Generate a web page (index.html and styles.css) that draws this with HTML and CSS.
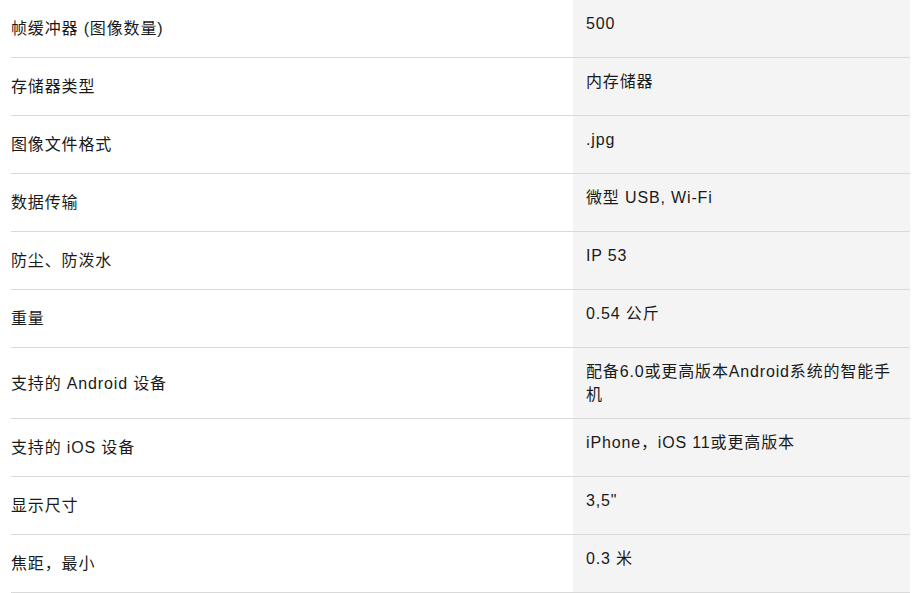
FILE: index.html
```html
<!DOCTYPE html>
<html lang="zh-CN">
<head>
<meta charset="utf-8">
<title>技术参数</title>
<link rel="stylesheet" href="styles.css">
</head>
<body>
<div class="specs">
  <div class="row"><div class="label">帧缓冲器 (图像数量)</div><div class="value">500</div></div>
  <div class="row"><div class="label">存储器类型</div><div class="value">内存储器</div></div>
  <div class="row"><div class="label">图像文件格式</div><div class="value">.jpg</div></div>
  <div class="row"><div class="label">数据传输</div><div class="value">微型 USB, Wi-Fi</div></div>
  <div class="row"><div class="label">防尘、防泼水</div><div class="value">IP 53</div></div>
  <div class="row"><div class="label">重量</div><div class="value">0.54 公斤</div></div>
  <div class="row"><div class="label">支持的 Android 设备</div><div class="value">配备6.0或更高版本Android系统的智能手机</div></div>
  <div class="row"><div class="label">支持的 iOS 设备</div><div class="value">iPhone，iOS 11或更高版本</div></div>
  <div class="row"><div class="label">显示尺寸</div><div class="value">3,5"</div></div>
  <div class="row"><div class="label">焦距，最小</div><div class="value">0.3 米</div></div>
</div>
</body>
</html>
```
FILE: styles.css
```css
html, body {
  margin: 0;
  padding: 0;
  background: #ffffff;
}

body {
  font-family: "Liberation Sans", Arial, "Noto Sans CJK SC", sans-serif;
  font-size: 16px;
  line-height: 23px;
  letter-spacing: 0.85px;
  color: #1a1a1a;
}

.specs {
  margin-left: 11px;
  width: 899px;
}

.row {
  display: grid;
  grid-template-columns: 562px 337px;
  min-height: 57px;
  border-bottom: 1px solid #d9d9d9;
}

.label {
  align-self: center;
}

.value {
  background: #f4f4f4;
  padding: 12px 13px 12px 13px;
}
```
